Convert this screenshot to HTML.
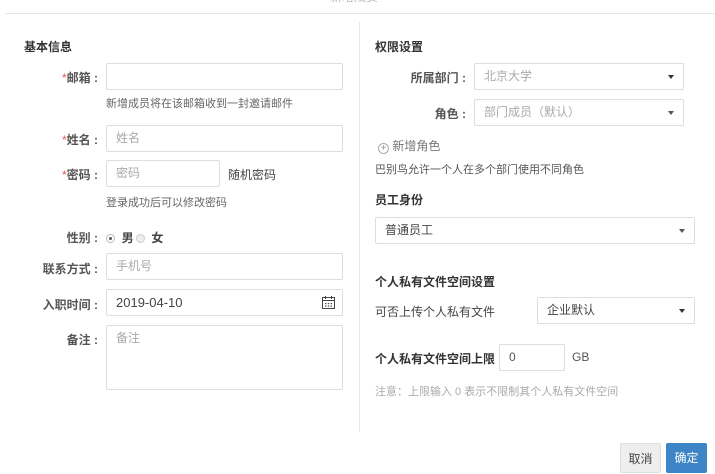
<!DOCTYPE html>
<html><head><meta charset="utf-8"><style>
*{box-sizing:border-box;margin:0;padding:0}
body{width:715px;height:470px;background:#fff;position:relative;overflow:hidden;font-family:"Liberation Sans","Noto Sans CJK SC",sans-serif;font-size:12px;color:#333}
.a{position:absolute;white-space:nowrap}
.in{position:absolute;border:1px solid #ddd;border-radius:2px;background:#fff;padding-left:9px;line-height:25px;color:#aaa;font-size:12px}
.lab{position:absolute;text-align:right;font-weight:bold;color:#555;white-space:nowrap}
.st{color:#e55;font-weight:normal}
.h{position:absolute;font-weight:bold;color:#333;font-size:12px}
.hint{position:absolute;color:#666;font-size:11px;white-space:nowrap}
.car{position:absolute;right:9px;top:11px;width:0;height:0;border-left:3.5px solid transparent;border-right:3.5px solid transparent;border-top:4px solid #333}
</style></head><body>
<div class="a" style="left:330px;top:-12px;color:#bbb;font-size:12px">新增成员</div>
<div class="a" style="left:5px;top:13px;width:710px;height:1px;background:#e5e5e5"></div>
<div class="a" style="left:359px;top:22px;width:1px;height:410px;background:#e8e8e8"></div>

<div class="h" style="left:24px;top:38px">基本信息</div>
<div class="lab" style="left:0;width:98px;top:69px"><span class="st">*</span>邮箱 :</div>
<div class="in" style="left:106px;top:63px;width:237px;height:27px"></div>
<div class="hint" style="left:106px;top:95px">新增成员将在该邮箱收到一封邀请邮件</div>
<div class="lab" style="left:0;width:98px;top:131px"><span class="st">*</span>姓名 :</div>
<div class="in" style="left:106px;top:125px;width:237px;height:27px">姓名</div>
<div class="lab" style="left:0;width:98px;top:166px"><span class="st">*</span>密码 :</div>
<div class="in" style="left:106px;top:160px;width:114px;height:27px">密码</div>
<div class="a" style="left:228px;top:166px;color:#444">随机密码</div>
<div class="hint" style="left:106px;top:194px">登录成功后可以修改密码</div>
<div class="lab" style="left:0;width:98px;top:229px">性别 :</div>
<div class="a" style="left:106px;top:229px;color:#444;font-weight:bold"><span style="display:inline-block;width:9px;height:9px;border:1px solid #bbb;border-radius:50%;vertical-align:-1px;position:relative"><span style="position:absolute;left:2px;top:2px;width:3px;height:3px;background:#555;border-radius:50%"></span></span>&nbsp; 男<span style="display:inline-block;width:9px;height:9px;border:1px solid #ccc;background:#eee;border-radius:50%;vertical-align:-1px;margin-left:2px"></span>&nbsp; 女</div>
<div class="lab" style="left:0;width:98px;top:260px">联系方式 :</div>
<div class="in" style="left:106px;top:253px;width:237px;height:27px">手机号</div>
<div class="lab" style="left:0;width:98px;top:296px">入职时间 :</div>
<div class="in" style="left:106px;top:289px;width:237px;height:27px;color:#444;font-size:13px">2019-04-10
<svg style="position:absolute;right:7px;top:6px" width="13" height="13" viewBox="0 0 13 13"><rect x="0.5" y="1.5" width="12" height="11" fill="none" stroke="#444"/><line x1="0.5" y1="4.5" x2="12.5" y2="4.5" stroke="#444"/><line x1="3.5" y1="0" x2="3.5" y2="3" stroke="#444"/><line x1="9.5" y1="0" x2="9.5" y2="3" stroke="#444"/><g fill="#444"><rect x="3" y="7" width="1.4" height="1.2"/><rect x="5.8" y="7" width="1.4" height="1.2"/><rect x="8.6" y="7" width="1.4" height="1.2"/><rect x="3" y="9.5" width="1.4" height="1.2"/><rect x="5.8" y="9.5" width="1.4" height="1.2"/><rect x="8.6" y="9.5" width="1.4" height="1.2"/></g></svg></div>
<div class="lab" style="left:0;width:98px;top:331px">备注 :</div>
<div class="in" style="left:106px;top:325px;width:237px;height:65px;line-height:24px">备注</div>

<div class="h" style="left:375px;top:38px">权限设置</div>
<div class="lab" style="left:360px;width:106px;top:69px">所属部门 :</div>
<div class="in" style="left:474px;top:63px;width:210px;height:27px">北京大学<span class="car"></span></div>
<div class="lab" style="left:360px;width:106px;top:105px">角色 :</div>
<div class="in" style="left:474px;top:99px;width:210px;height:27px">部门成员（默认）<span class="car" style="border-top-color:#555"></span></div>
<div class="a" style="left:378px;top:137px;color:#777"><span style="display:inline-block;width:11px;height:11px;border:1px solid #aaa;border-radius:50%;text-align:center;line-height:9px;font-size:10px;color:#999;vertical-align:-1px">+</span> 新增角色</div>
<div class="hint" style="left:375px;top:161px;color:#555">巴别鸟允许一个人在多个部门使用不同角色</div>
<div class="h" style="left:375px;top:191px">员工身份</div>
<div class="in" style="left:375px;top:217px;width:320px;height:27px;color:#444">普通员工<span class="car" style="border-top-color:#555"></span></div>
<div class="h" style="left:375px;top:273px">个人私有文件空间设置</div>
<div class="a" style="left:375px;top:303px;color:#444">可否上传个人私有文件</div>
<div class="in" style="left:537px;top:297px;width:158px;height:27px;color:#444">企业默认<span class="car"></span></div>
<div class="h" style="left:375px;top:350px">个人私有文件空间上限</div>
<div class="in" style="left:499px;top:344px;width:66px;height:27px;color:#555">0</div>
<div class="a" style="left:572px;top:350px;color:#555">GB</div>
<div class="hint" style="left:375px;top:383px;color:#aaa">注意：上限输入 0 表示不限制其个人私有文件空间</div>

<div class="a" style="left:620px;top:443px;width:41px;height:30px;background:#eee;border:1px solid #ddd;border-radius:2px;text-align:center;line-height:30px;color:#444">取消</div>
<div class="a" style="left:666px;top:443px;width:41px;height:30px;background:#3d85c6;border-radius:2px;text-align:center;line-height:30px;color:#fff">确定</div>
</body></html>
